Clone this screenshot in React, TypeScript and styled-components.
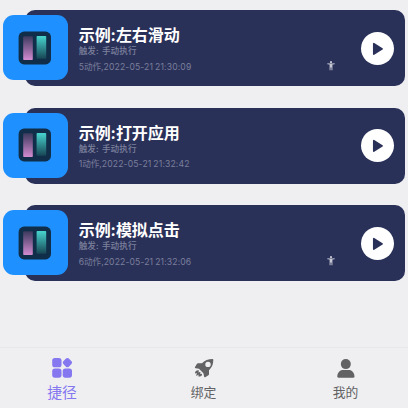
import React from 'react';
import styled, { createGlobalStyle } from 'styled-components';

const GlobalStyle = createGlobalStyle`
  * { box-sizing: border-box; }
  body {
    margin: 0;
    background: #efeff1;
    font-family: Inter, "Noto Sans CJK SC", sans-serif;
  }
`;

const Screen = styled.div`
  width: 408px;
  height: 408px;
  display: flex;
  flex-direction: column;
  overflow: hidden;
  background: #efeff1;
`;

const List = styled.main`
  flex: 1;
  display: flex;
  flex-direction: column;
  gap: 21.5px;
  padding: 10.4px 3.4px 0 2.6px;
`;

const Row = styled.article`
  display: flex;
  align-items: center;
  height: 76px;
  flex: none;
`;

const Tile = styled.div`
  position: relative;
  z-index: 1;
  width: 65px;
  height: 65px;
  margin-top: -1px;
  margin-right: -42.6px;
  border-radius: 11px;
  background: #1f90ff;
  display: flex;
  align-items: center;
  justify-content: center;
  flex: none;
`;

const Card = styled.div`
  flex: 1;
  height: 100%;
  border-radius: 10px;
  background: #2a3159;
  display: flex;
  align-items: center;
  padding: 0 10.6px 0 53.7px;
`;

const Info = styled.div`
  width: 248px;
  height: 100%;
  padding-top: 16px;
  white-space: nowrap;
`;

const Title = styled.h2`
  margin: 0;
  height: 19px;
  line-height: 19px;
  font-size: 16px;
  letter-spacing: -0.05px;
  font-weight: 700;
  color: #fff;
`;

const Trigger = styled.p`
  margin: 0;
  height: 13px;
  line-height: 13px;
  font-size: 8.6px;
  font-weight: 500;
  letter-spacing: 0.08px;
  word-spacing: 0.8px;
  color: #7c819d;
`;

const Meta = styled.div`
  display: flex;
  align-items: center;
  margin-top: 1.2px;
  height: 15px;
  line-height: 15px;
  font-size: 8.6px;
  color: #7a7f9b;
`;

const Stamp = styled.span`
  letter-spacing: 0.14px;
  word-spacing: -0.6px;
`;

const Assist = styled.span`
  display: flex;
  margin-left: auto;
  margin-right: -8.4px;
  margin-top: -2px;
`;

const Play = styled.button`
  width: 33px;
  height: 33px;
  margin-left: auto;
  padding: 0;
  border: 0;
  border-radius: 50%;
  background: #fff;
  display: flex;
  align-items: center;
  justify-content: center;
`;

const TabBar = styled.nav`
  height: 61px;
  border-top: 1px solid #e8e8ea;
  display: grid;
  grid-template-columns: 124px 159px 125px;
  background: #efeff1;
`;

const Tab = styled.a<{ $active?: boolean }>`
  display: flex;
  flex-direction: column;
  align-items: center;
  padding-top: 9px;
  color: ${(p) => (p.$active ? '#8577f0' : '#626264')};
  font-size: ${(p) => (p.$active ? 14.8 : 12.8)}px;
  line-height: 20px;

  svg { margin-bottom: 5px; }
`;

function AppIcon() {
  return (
    <svg width="34" height="34" viewBox="0 0 34 34">
      <defs>
        <linearGradient id="pink" x1="0" y1="0" x2="0" y2="1">
          <stop offset="0" stopColor="#3c3a5e" />
          <stop offset="1" stopColor="#d38bd0" />
        </linearGradient>
        <linearGradient id="teal" x1="0" y1="0" x2="0" y2="1">
          <stop offset="0" stopColor="#48d5cf" />
          <stop offset="1" stopColor="#184655" />
        </linearGradient>
      </defs>
      <rect x="0.6" y="0.6" width="32.4" height="32.8" rx="5.5" fill="#102e49" />
      <rect x="5.2" y="5.3" width="9.6" height="23.7" rx="0.8" fill="url(#pink)" />
      <rect x="18.6" y="5" width="9.6" height="22.7" rx="0.8" fill="url(#teal)" />
    </svg>
  );
}

function AssistIcon() {
  return (
    <svg width="8" height="10" viewBox="0 0 8 10" fill="#c6c8d4">
      <circle cx="4" cy="1.2" r="1.1" />
      <path d="M.4 2.3 3 2.6h2l2.6-.3v1l-2.2.3v5.7h-.9V6.5h-1v2.800h-.9V3.600L.4 3.300z" />
    </svg>
  );
}

function PlayIcon() {
  return (
    <svg width="33" height="33" viewBox="0 0 33 33">
      <path d="M12.8 11.7v10.4l8.3-5.2z" fill="#2a3159" stroke="#2a3159" strokeWidth="1.7" strokeLinejoin="round" />
    </svg>
  );
}

function ShortcutIcon() {
  return (
    <svg width="20" height="21" viewBox="0 0 20 21" fill="currentColor">
      <rect x="0.2" y="1" width="9.3" height="9.3" rx="2.6" />
      <rect x="0.2" y="11.4" width="9.3" height="9.3" rx="2.6" />
      <rect x="10.7" y="11.4" width="9.3" height="9.3" rx="2.6" />
      <rect x="11.5" y="1.7" width="7.8" height="7.8" rx="2.4" transform="rotate(45 15.4 5.6)" />
    </svg>
  );
}

function RocketIcon() {
  return (
    <svg width="20" height="21" viewBox="0 0 20 21" fill="currentColor">
      <path
        fillRule="evenodd"
        d="M18.6 2.1c.5 0 .7.2.7.7-.1 4.6-1.1 7.2-4.3 10.4v4.1c0 .5-.2.8-.6 1l-3.2 1.9c-.6.3-1 0-1.1-.6l-.7-3.4-4.4-4.4-3.4-.6c-.6-.1-.9-.6-.6-1.1l2-3.3c.2-.4.6-.6 1-.6h4C11.2 3.1 14 2.1 18.6 2.1zM14 4.7a2.7 2.7 0 1 0 0 5.4 2.7 2.7 0 0 0 0-5.4z"
      />
      <path d="M4.2 13.3c.7 0 .8.5.5 1.1l-.5 1.1 1.5-.4c.6-.1.9.2.8.7l-.4 1.5 1-.5c.7-.2 1.1.1.9.9-.4 1.7-1.9 1.9-3.6 1.9l.1-2-1.7 1.1c-.4.2-.8-.1-.6-.6l1-1.8-2.2.2c0-1.900.8-3.200 3.200-3.200z" />
    </svg>
  );
}

function PersonIcon() {
  return (
    <svg width="20" height="21" viewBox="0 0 20 21" fill="currentColor">
      <circle cx="9.8" cy="7.1" r="5" />
      <path d="M1.3 19.5c.2-4.7 3.2-6.5 6-6.5h5.2c2.8 0 5.8 1.8 6 6.5 0 .8-.4 1.2-1.1 1.2h-15c-.7 0-1.1-.4-1.1-1.2z" />
    </svg>
  );
}

const shortcuts = [
  { title: '示例:左右滑动', count: '5动作,', time: '2022-05-21 21:30:09', assist: true },
  { title: '示例:打开应用', count: '1动作,', time: '2022-05-21 21:32:42', assist: false },
  { title: '示例:模拟点击', count: '6动作,', time: '2022-05-21 21:32:06', assist: true },
];

export default function App() {
  return (
    <>
      <GlobalStyle />
      <Screen>
        <List>
          {shortcuts.map((item) => (
            <Row key={item.title}>
              <Tile><AppIcon /></Tile>
              <Card>
                <Info>
                  <Title>{item.title}</Title>
                  <Trigger>触发: 手动执行</Trigger>
                  <Meta>
                    <span>{item.count}</span>
                    <Stamp>{item.time}</Stamp>
                    {item.assist && <Assist><AssistIcon /></Assist>}
                  </Meta>
                </Info>
                <Play aria-label="运行"><PlayIcon /></Play>
              </Card>
            </Row>
          ))}
        </List>
        <TabBar>
          <Tab $active><ShortcutIcon />捷径</Tab>
          <Tab><RocketIcon />绑定</Tab>
          <Tab><PersonIcon />我的</Tab>
        </TabBar>
      </Screen>
    </>
  );
}
